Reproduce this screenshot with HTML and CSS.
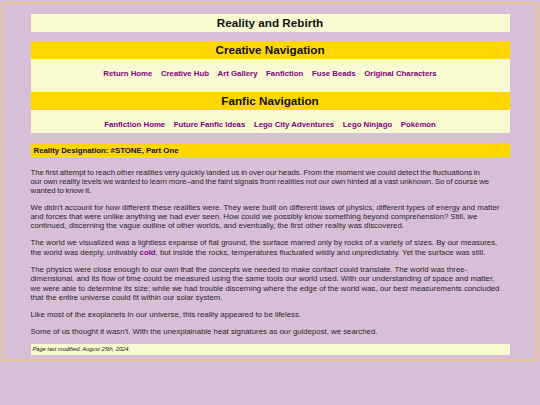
FILE: index.html
```html
<!DOCTYPE html>
<html lang="en">
<head>
<meta charset="utf-8">
<title>Reality and Rebirth</title>
<link rel="stylesheet" href="styles.css">
</head>
<body>
<div class="wrap">
  <h1 class="title">Reality and Rebirth</h1>

  <div class="nav">
    <h2 class="nav-head">Creative Navigation</h2>
    <ul class="nav-links nav-links-first">
      <li><a href="#">Return Home</a></li>
      <li><a href="#">Creative Hub</a></li>
      <li><a href="#">Art Gallery</a></li>
      <li><a href="#">Fanfiction</a></li>
      <li><a href="#">Fuse Beads</a></li>
      <li><a href="#">Original Characters</a></li>
    </ul>
    <h2 class="nav-head">Fanfic Navigation</h2>
    <ul class="nav-links">
      <li><a href="#">Fanfiction Home</a></li>
      <li><a href="#">Future Fanfic Ideas</a></li>
      <li><a href="#">Lego City Adventures</a></li>
      <li><a href="#">Lego Ninjago</a></li>
      <li><a href="#">Pokémon</a></li>
    </ul>
  </div>

  <h3 class="section-head">Reality Designation: #STONE, Part One</h3>

  <div class="story">
    <p class="tight">The first attempt to reach other realities very quickly landed us in over our heads. From the moment we could detect the fluctuations in<br>our own reality levels we wanted to learn more–and the faint signals from realities not our own hinted at a vast unknown. So of course we wanted to know it.</p>
    <p>We didn't account for how different these realities were. They were built on different laws of physics, different types of energy and matter and forces that were unlike anything we had ever seen. How could we possibly know something beyond comprehension? Still, we continued, discerning the vague outline of other worlds, and eventually, the first other reality was discovered.</p>
    <p>The world we visualized was a lightless expanse of flat ground, the surface marred only by rocks of a variety of sizes. By our measures, the world was deeply, unlivably <a href="#">cold</a>, but inside the rocks, temperatures fluctuated wildly and unpredictably. Yet the surface was still.</p>
    <p>The physics were close enough to our own that the concepts we needed to make contact could translate. The world was three-dimensional, and its flow of time could be measured using the same tools our world used. With our understanding of space and matter, we&nbsp;were able to determine its size; while we had trouble discerning where the edge of the world was, our best measurements concluded that&nbsp;the entire universe could fit within our solar system.</p>
    <p>Like most of the exoplanets in our universe, this reality appeared to be lifeless.</p>
    <p>Some of us thought it wasn't. With the unexplainable heat signatures as our guidepost, we searched.</p>
  </div>

  <div class="footer">Page last modified: August 25th, 2024.</div>
</div>
</body>
</html>
```

FILE: styles.css
```css
html, body {
  margin: 0;
  padding: 0;
  background: #d8bfd8;
}

body {
  font-family: "Liberation Sans", Arial, sans-serif;
  font-size: 7.8px;
  color: #2a262a;
}

.wrap {
  margin: 2px;
  border: 2px solid #e9c48e;
  padding: 10px 26.5px 4px;
}

.title {
  margin: 0 0 9px;
  background: #fafad2;
  font-size: 11.7px;
  line-height: 13.4px;
  padding: 2.3px 4px;
  text-align: center;
  font-weight: bold;
  color: #111;
}

.nav {
  background: #fafad2;
  margin-bottom: 10px;
}

.nav-head {
  margin: 0;
  background: #ffd700;
  font-size: 11.7px;
  line-height: 13.4px;
  padding: 2.3px 4px;
  text-align: center;
  font-weight: bold;
  color: #111;
}

.nav-links {
  list-style: none;
  margin: 0;
  padding: 9.5px 0 4.5px;
  display: flex;
  justify-content: center;
  gap: 8.6px;
  line-height: 9px;
}

.nav-links-first {
  padding-bottom: 14.5px;
}

.nav-links a,
.story a {
  color: #800080;
  font-weight: bold;
  text-decoration: none;
}

.section-head {
  margin: 0 0 10.5px;
  background: #ffd700;
  font-size: 7.8px;
  line-height: 9px;
  padding: 2.5px 3px;
  font-weight: bold;
  color: #111;
}

.story {
  padding-right: 3px;
}

.story p {
  margin: 0 0 7.8px;
  line-height: 9.35px;
}

.story p.tight {
  word-spacing: -0.55px;
  margin-bottom: 7px;
}

.footer {
  background: #fafad2;
  font-style: italic;
  font-size: 5.7px;
  line-height: 7px;
  padding: 1.9px 2px;
  color: #111;
}
```
